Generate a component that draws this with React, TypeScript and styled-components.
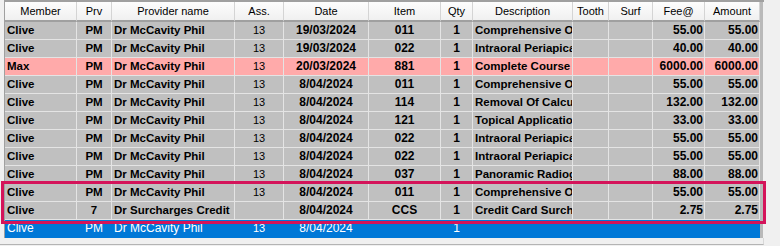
import React from 'react';
import styled, { createGlobalStyle } from 'styled-components';

const Global = createGlobalStyle`
  html, body { margin: 0; padding: 0; background: #f0f0f0; }
  body { font-family: "Liberation Sans", Arial, sans-serif; }
`;

type Align = 'left' | 'center' | 'right';
type Kind = 'text' | 'num' | 'small';
type Tone = 'gray' | 'pink' | 'blue';

interface Col { title: string; width: number; align: Align; kind: Kind; }

const columns: Col[] = [
  { title: 'Member', width: 72, align: 'left', kind: 'text' },
  { title: 'Prv', width: 35, align: 'center', kind: 'text' },
  { title: 'Provider name', width: 123, align: 'left', kind: 'text' },
  { title: 'Ass.', width: 49, align: 'center', kind: 'small' },
  { title: 'Date', width: 85, align: 'center', kind: 'num' },
  { title: 'Item', width: 72, align: 'center', kind: 'num' },
  { title: 'Qty', width: 32, align: 'center', kind: 'num' },
  { title: 'Description', width: 100, align: 'left', kind: 'text' },
  { title: 'Tooth', width: 36, align: 'center', kind: 'text' },
  { title: 'Surf', width: 44, align: 'center', kind: 'text' },
  { title: 'Fee@', width: 52, align: 'right', kind: 'num' },
  { title: 'Amount', width: 55, align: 'right', kind: 'num' },
];

interface Row { tone: Tone; cells: string[]; }

const dr = 'Dr McCavity Phil';
const rows: Row[] = [
  { tone: 'gray', cells: ['Clive', 'PM', dr, '13', '19/03/2024', '011', '1', 'Comprehensive Oral Examination', '', '', '55.00', '55.00'] },
  { tone: 'gray', cells: ['Clive', 'PM', dr, '13', '19/03/2024', '022', '1', 'Intraoral Periapical Radiograph', '', '', '40.00', '40.00'] },
  { tone: 'pink', cells: ['Max', 'PM', dr, '13', '20/03/2024', '881', '1', 'Complete Course', '', '', '6000.00', '6000.00'] },
  { tone: 'gray', cells: ['Clive', 'PM', dr, '13', '8/04/2024', '011', '1', 'Comprehensive Oral Examination', '', '', '55.00', '55.00'] },
  { tone: 'gray', cells: ['Clive', 'PM', dr, '13', '8/04/2024', '114', '1', 'Removal Of Calculus', '', '', '132.00', '132.00'] },
  { tone: 'gray', cells: ['Clive', 'PM', dr, '13', '8/04/2024', '121', '1', 'Topical Application', '', '', '33.00', '33.00'] },
  { tone: 'gray', cells: ['Clive', 'PM', dr, '13', '8/04/2024', '022', '1', 'Intraoral Periapical Radiograph', '', '', '55.00', '55.00'] },
  { tone: 'gray', cells: ['Clive', 'PM', dr, '13', '8/04/2024', '022', '1', 'Intraoral Periapical Radiograph', '', '', '55.00', '55.00'] },
  { tone: 'gray', cells: ['Clive', 'PM', dr, '13', '8/04/2024', '037', '1', 'Panoramic Radiograph', '', '', '88.00', '88.00'] },
  { tone: 'gray', cells: ['Clive', 'PM', dr, '13', '8/04/2024', '011', '1', 'Comprehensive Oral Examination', '', '', '55.00', '55.00'] },
  { tone: 'gray', cells: ['Clive', '7', 'Dr Surcharges Credit', '', '8/04/2024', 'CCS', '1', 'Credit Card Surcharge', '', '', '2.75', '2.75'] },
  { tone: 'blue', cells: ['Clive', 'PM', dr, '13', '8/04/2024', '', '1', '', '', '', '', ''] },
];

const Frame = styled.div`
  position: relative;
  width: 780px;
  height: 246px;
  overflow: hidden;
  background: #f0f0f0;
`;

const Viewport = styled.div`
  width: 764px;
  height: 245px;
  box-sizing: border-box;
  border-bottom: 1px solid #b4b4b4;
  border-right: 1px solid #d8d8d8;
  padding-left: 4px;
`;

const Grid = styled.div`
  width: 759px;
  display: grid;
  grid-template-columns: ${columns.map((c) => `${c.width}px`).join(' ')} 3px;
  border-top: 2px solid #a0a0a0;
  border-left: 1px solid #a0a0a0;
  background: #f0f0f0;
`;

const HeadCell = styled.div`
  height: 18px;
  line-height: 19px;
  border-right: 1px solid #d4d4d4;
  border-bottom: 2px solid #a0a0a0;
  background: linear-gradient(#fdfdfd, #f0f0f0);
  font-size: 11px;
  color: #000;
  text-align: center;
  white-space: nowrap;
  overflow: hidden;
`;

const Filler = styled.div<{ $head?: boolean }>`
  height: ${(p) => (p.$head ? '20px' : '18px')};
  background: #b9b9b9;
`;

const toneBg: Record<Tone, string> = { gray: '#c0c0c0', pink: '#ffaaaa', blue: '#0078d7' };

const Cell = styled.div<{ $align: Align; $kind: Kind; $tone: Tone }>`
  height: 17px;
  line-height: 17px;
  border-right: 1px solid ${(p) => (p.$tone === 'blue' ? '#0078d7' : '#e4e4e4')};
  border-bottom: 1px solid ${(p) => (p.$tone === 'blue' ? '#0078d7' : '#e4e4e4')};
  background: ${(p) => toneBg[p.$tone]};
  color: ${(p) => (p.$tone === 'blue' ? '#ffffff' : '#000000')};
  text-align: ${(p) => p.$align};
  padding: ${(p) => (p.$align === 'left' ? '0 0 0 2px' : p.$align === 'right' ? '0 1px 0 0' : '0')};
  font-size: ${(p) => (p.$tone === 'blue' ? (p.$kind === 'small' ? '11px' : '12px') : p.$kind === 'num' ? '12px' : p.$kind === 'small' ? '11px' : '11.5px')};
  font-weight: ${(p) => (p.$tone === 'blue' || p.$kind === 'small' ? 400 : 700)};
  white-space: nowrap;
  overflow: hidden;
`;

const Highlight = styled.div`
  position: absolute;
  left: 1px;
  top: 181px;
  width: 765px;
  height: 43px;
  box-sizing: border-box;
  border: 3px solid #d4145a;
  pointer-events: none;
`;

export default function App() {
  return (
    <Frame>
      <Global />
      <Viewport>
        <Grid>
          {columns.map((c) => (
            <HeadCell key={c.title}>{c.title}</HeadCell>
          ))}
          <Filler $head />
          {rows.map((r, ri) => (
            <React.Fragment key={ri}>
              {r.cells.map((v, ci) => (
                <Cell key={ci} $align={columns[ci].align} $kind={columns[ci].kind} $tone={r.tone}>
                  {v}
                </Cell>
              ))}
              <Filler />
            </React.Fragment>
          ))}
        </Grid>
      </Viewport>
      <Highlight />
    </Frame>
  );
}
